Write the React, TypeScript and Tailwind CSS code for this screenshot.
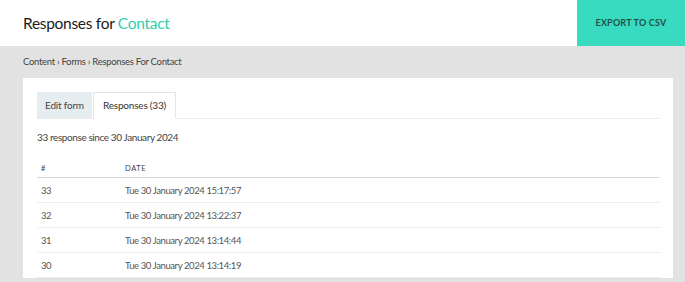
import React from "react";

const rows = [
  { id: 33, date: "Tue 30 January 2024 15:17:57" },
  { id: 32, date: "Tue 30 January 2024 13:22:37" },
  { id: 31, date: "Tue 30 January 2024 13:14:44" },
  { id: 30, date: "Tue 30 January 2024 13:14:19" },
];

export default function App() {
  return (
    <div className="h-[282px] overflow-hidden bg-[#e2e2e2] font-['Lato',sans-serif]">
      <header className="flex h-[46px] items-stretch justify-between bg-white">
        <h1 className="flex items-center pl-[23px] pt-[1px] text-[15.5px] tracking-[-0.3px] text-[#1a1a1a]">
          Responses for&nbsp;<span className="text-[#2fcfb0]">Contact</span>
        </h1>
        <button className="w-[108px] bg-[#38dbc0] text-[9px] font-bold tracking-[0.2px] text-[#1d5148]">
          EXPORT TO CSV
        </button>
      </header>

      <nav className="flex h-[32px] items-center pl-[23px] text-[9.5px] tracking-[-0.3px] text-[#444]">
        Content › Forms › Responses For Contact
      </nav>

      <section className="ml-[23px] mr-[12px] bg-white pl-[14px] pr-[13px] pt-[14px]">
        <div className="flex border-b border-[#eaeaea]">
          <div className="flex h-[26px] w-[55px] items-center justify-center whitespace-nowrap bg-[#e6edf0] text-[10px] tracking-[-0.2px] text-[#444]">
            Edit form
          </div>
          <div className="-mb-px ml-px flex h-[27px] w-[83px] items-center justify-center whitespace-nowrap border border-[#e5e5e5] border-b-white text-[10px] tracking-[-0.2px] text-[#333]">
            Responses (33)
          </div>
        </div>

        <p className="mt-[11px] text-[10px] leading-[14px] tracking-[-0.4px] text-[#444]">33 response since 30 January 2024</p>

        <div className="mt-[16px] flex h-[18px] items-center border-b border-[#d7d7d7] text-[7.5px] tracking-[0.6px] text-[#444]">
          <div className="w-[88px] pl-[4px]">#</div>
          <div>DATE</div>
        </div>
        {rows.map((r) => (
          <div key={r.id} className="flex h-[25px] items-center border-b border-[#eeeeee] pt-[2px] text-[9.5px] tracking-[-0.4px] text-[#555]">
            <div className="w-[88px] pl-[4px]">{r.id}</div>
            <div>{r.date}</div>
          </div>
        ))}
      </section>
    </div>
  );
}
